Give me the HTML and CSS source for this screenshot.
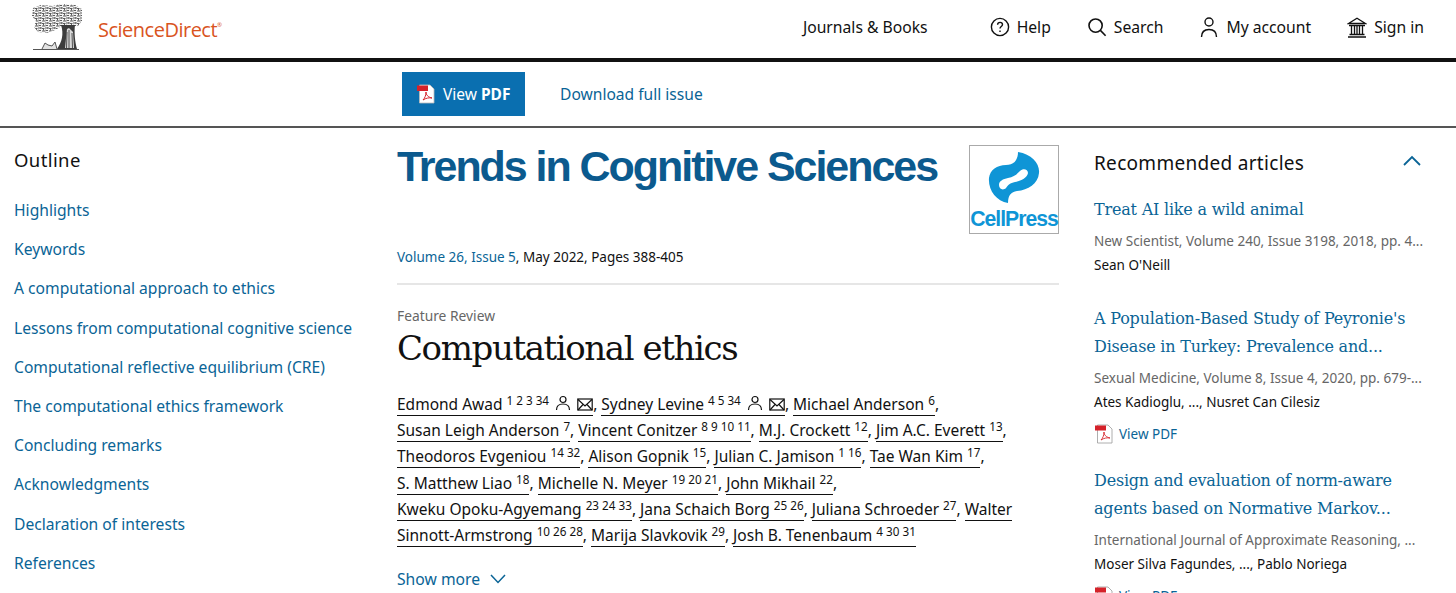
FILE: index.html
```html
<!DOCTYPE html>
<html lang="en">

<head>
    <meta charset="utf-8">
    <title>Computational ethics - ScienceDirect</title>
    <link rel="stylesheet" href="styles.css">
</head>

<body>

    <!-- top header -->
    <header class="site-header">
        <a class="brand">
            <svg class="tree" width="52" height="50" viewBox="0 0 52 50">
                <defs>
                    <pattern id="leaves" width="7" height="5" patternUnits="userSpaceOnUse">
                        <rect width="7" height="5" fill="#f4f4f4"/>
                        <path d="M0 1h3M4 1.500h2.500M1 3.500h2M4 4h3M3 0v2M0 2.500v2M5.500 2v1.500" stroke="#333" stroke-width=".8"/>
                    </pattern>
                </defs>
                <path d="M2 6 L10 3 L22 4 L30 2 L44 3 L51 7 L51 19 L47 24 L38 25 L31 24 L24 28 L16 31 L7 30 L3 25 L5 19 L1 14Z" fill="url(#leaves)"/>
                <path d="M30 23 C33 32 31 40 26 47 L46 47 C44 40 43 30 44 23Z" fill="#3c3c3c"/>
                <path d="M36 27 L38 26 L42 30 L43 46 L34 46Z" fill="#d8d8d8"/>
                <path d="M38 28 L38 46 M41 31 L41.500 46 M36 30 L35.500 46" stroke="#444" stroke-width=".9"/>
                <path d="M2 47.500 H48" stroke="#555" stroke-width="1"/>
                <path d="M11 47 L14 41 L17 43 L21 44 L24 40 L26 47" fill="#e2e2e2" stroke="#555" stroke-width="1"/>
            </svg>
            <span class="brand-name">ScienceDirect<sup>®</sup></span>
        </a>
        <nav class="site-nav">
            <a class="journals">Journals &amp; Books</a>
            <a class="nav-item">
                <svg width="20" height="20" viewBox="0 0 20 20" fill="none" stroke="#111" stroke-width="1.400"><circle cx="10" cy="10" r="8.600"/><path d="M7.600 7.800c0-1.500 1.100-2.400 2.500-2.400s2.400.9 2.400 2.200c0 1.900-2.500 2-2.500 4"/><path d="M10 13.600v1.300"/></svg>
                Help
            </a>
            <a class="nav-item">
                <svg width="20" height="20" viewBox="0 0 20 20" fill="none" stroke="#111" stroke-width="1.600"><circle cx="8.600" cy="8.600" r="6.600"/><path d="M13.400 13.400 L18.600 18.800"/></svg>
                Search
            </a>
            <a class="nav-item">
                <svg width="20" height="22" viewBox="0 0 20 22" fill="none" stroke="#111" stroke-width="1.400"><circle cx="10" cy="6" r="4"/><path d="M2.500 21c0-5 3-7.500 7.500-7.500s7.500 2.500 7.500 7.500"/></svg>
                My account
            </a>
            <a class="nav-item">
                <svg width="20" height="21" viewBox="0 0 20 21" fill="none" stroke="#111" stroke-width="1.300"><path d="M1.500 6.500 L10 1.200 L18.500 6.500Z"/><path d="M2 8.500H18M4.500 9v8M7.500 9v8M10 9v8M12.500 9v8M15.500 9v8M2.500 17.500H17.500M1 20H19"/></svg>
                Sign in
            </a>
        </nav>
    </header>

    <!-- toolbar -->
    <div class="toolbar">
        <a class="btn-pdf">
            <svg class="pdf-icon" width="20" height="20" viewBox="0 0 20 20">
                <path d="M3.500 1H14L18 5V19H3.500Z" fill="#fff" stroke="#bbb" stroke-width=".8"/>
                <rect x="1" y="1.500" width="11" height="5.500" fill="#d5222a"/>
                <path d="M7 16c2-2 3-5 3-8 0 3 2 5 6 6-3-.500-6 0-9 2Z" fill="none" stroke="#d5222a" stroke-width="1"/>
            </svg>
            <span>View <b>PDF</b></span>
        </a>
        <a class="link-issue">Download full issue</a>
    </div>

    <div class="page">
        <!-- outline -->
        <aside class="outline">
            <h2>Outline</h2>
            <ul>
                <li>Highlights</li>
                <li>Keywords</li>
                <li>A computational approach to ethics</li>
                <li>Lessons from computational cognitive science</li>
                <li>Computational reflective equilibrium (CRE)</li>
                <li>The computational ethics framework</li>
                <li>Concluding remarks</li>
                <li>Acknowledgments</li>
                <li>Declaration of interests</li>
                <li>References</li>
            </ul>
        </aside>

        <!-- article -->
        <main class="article">
            <div class="journal-head">
                <h1 class="journal-title">Trends in Cognitive Sciences</h1>
                <div class="cell-logo">
                    <svg width="88" height="63" viewBox="0 0 88 63">
                        <path d="M48 6 C62 8 70 18 69 27 C68 38 58 44 47 45 C41 46 38 49 38 57 C26 55 18 44 19 32 C20 24 27 19 36 19 C43 19 48 15 48 6Z" fill="#0f95d6"/>
                        <path d="M29 39 C29 35 33 33 38 32 C44 31 47 28 50 25 C53 22 58 23 58 27 C57 32 51 35 45 36 C40 37 38 39 36 42 C33 45 29 43 29 39Z" fill="#fff"/>
                    </svg>
                    <span>CellPress</span>
                </div>
            </div>
            <p class="issue"><a>Volume 26, Issue 5</a>, May 2022, Pages 388-405</p>
            <p class="article-type">Feature Review</p>
            <h1 class="article-title">Computational ethics</h1>
            <p class="authors">
                <a>Edmond Awad <sup>1 2 3 34</sup> <svg class="a-icon" width="16" height="16" viewBox="0 0 16 16" fill="none" stroke="#111" stroke-width="1.200"><circle cx="8" cy="4.500" r="3"/><path d="M1.500 15c0-4 2.500-6 6.500-6s6.500 2 6.500 6"/></svg> <svg class="a-icon" width="16" height="13" viewBox="0 0 16 13" fill="none" stroke="#111" stroke-width="1.200"><rect x=".8" y="1" width="14.400" height="11"/><path d="M1 1.500 8 8l7-6.500M1 12l5-5.500M15 12l-5-5.500"/></svg></a>,
                <a>Sydney Levine <sup>4 5 34</sup> <svg class="a-icon" width="16" height="16" viewBox="0 0 16 16" fill="none" stroke="#111" stroke-width="1.200"><circle cx="8" cy="4.500" r="3"/><path d="M1.500 15c0-4 2.500-6 6.500-6s6.500 2 6.500 6"/></svg> <svg class="a-icon" width="16" height="13" viewBox="0 0 16 13" fill="none" stroke="#111" stroke-width="1.200"><rect x=".8" y="1" width="14.400" height="11"/><path d="M1 1.500 8 8l7-6.500M1 12l5-5.500M15 12l-5-5.500"/></svg></a>,
                <a>Michael Anderson <sup>6</sup></a>,<br>
                <a>Susan Leigh Anderson <sup>7</sup></a>,
                <a>Vincent Conitzer <sup>8 9 10 11</sup></a>,
                <a>M.J. Crockett <sup>12</sup></a>,
                <a>Jim A.C. Everett <sup>13</sup></a>,<br>
                <a>Theodoros Evgeniou <sup>14 32</sup></a>,
                <a>Alison Gopnik <sup>15</sup></a>,
                <a>Julian C. Jamison <sup>1 16</sup></a>,
                <a>Tae Wan Kim <sup>17</sup></a>,<br>
                <a>S. Matthew Liao <sup>18</sup></a>,
                <a>Michelle N. Meyer <sup>19 20 21</sup></a>,
                <a>John Mikhail <sup>22</sup></a>,<br>
                <a>Kweku Opoku-Agyemang <sup>23 24 33</sup></a>,
                <a>Jana Schaich Borg <sup>25 26</sup></a>,
                <a>Juliana Schroeder <sup>27</sup></a>,
                <a>Walter</a><br>
                <a>Sinnott-Armstrong <sup>10 26 28</sup></a>,
                <a>Marija Slavkovik <sup>29</sup></a>,
                <a>Josh B. Tenenbaum <sup>4 30 31</sup></a>
            </p>
            <a class="show-more">Show more
                <svg width="16" height="10" viewBox="0 0 16 10" fill="none" stroke="#0a6496" stroke-width="1.500"><path d="M1 1 L8 8.500 L15 1"/></svg>
            </a>
        </main>

        <!-- recommended -->
        <aside class="recommended">
            <div class="rec-head">
                <h2>Recommended articles</h2>
                <svg class="rec-toggle" width="18" height="11" viewBox="0 0 18 11" fill="none" stroke="#0a6496" stroke-width="1.800"><path d="M1 10 L9 2 L17 10"/></svg>
            </div>
            <article class="rec rec-nopdf">
                <a class="rec-title">Treat AI like a wild animal</a>
                <p class="rec-source">New Scientist, Volume 240, Issue 3198, 2018, pp. 4...</p>
                <p class="rec-authors">Sean O'Neill</p>
            </article>
            <article class="rec">
                <a class="rec-title">A Population-Based Study of Peyronie's Disease in Turkey: Prevalence and...</a>
                <p class="rec-source">Sexual Medicine, Volume 8, Issue 4, 2020, pp. 679-...</p>
                <p class="rec-authors">Ates Kadioglu, ..., Nusret Can Cilesiz</p>
                <a class="rec-pdf">
                    <svg width="20" height="20" viewBox="0 0 20 20"><path d="M3.500 1H14L18 5V19H3.500Z" fill="#fff" stroke="#999" stroke-width=".8"/><rect x="1" y="1.500" width="11" height="5" fill="#d5222a"/><path d="M7 16c2-2 3-5 3-8 0 3 2 5 6 6-3-.500-6 0-9 2Z" fill="none" stroke="#d5222a" stroke-width=".9"/></svg>
                    View PDF
                </a>
            </article>
            <article class="rec">
                <a class="rec-title">Design and evaluation of norm-aware agents based on Normative Markov...</a>
                <p class="rec-source">International Journal of Approximate Reasoning, ...</p>
                <p class="rec-authors">Moser Silva Fagundes, ..., Pablo Noriega</p>
                <a class="rec-pdf">
                    <svg width="20" height="20" viewBox="0 0 20 20"><path d="M3.500 1H14L18 5V19H3.500Z" fill="#fff" stroke="#999" stroke-width=".8"/><rect x="1" y="1.500" width="11" height="5" fill="#d5222a"/><path d="M7 16c2-2 3-5 3-8 0 3 2 5 6 6-3-.500-6 0-9 2Z" fill="none" stroke="#d5222a" stroke-width=".9"/></svg>
                    View PDF
                </a>
            </article>
        </aside>
    </div>

</body>

</html>
```

FILE: styles.css
```css
* {
    box-sizing: border-box;
}

html,
body {
    height: 593px;
    overflow: hidden;
}

body {
    margin: 0;
    background: #fff;
    color: #111;
    font-family: "Noto Sans", sans-serif;
    font-size: 16px;
}

a {
    color: inherit;
    text-decoration: none;
}

p,
h1,
h2,
ul {
    margin: 0;
    padding: 0;
    font-weight: 400;
}

/* header */
.site-header {
    height: 62px;
    border-bottom: 4px solid #111;
    display: flex;
    align-items: center;
    justify-content: space-between;
    padding: 0 32px 0 31px;
}

.brand {
    display: flex;
    align-items: center;
    gap: 15px;
    margin-top: -4px;
}

.brand-name {
    font-family: "Open Sans", sans-serif;
    font-size: 20px;
    letter-spacing: -0.5px;
    color: #d9541e;
    margin-top: 4px;
}

.brand-name sup {
    font-size: 6px;
    vertical-align: 10px;
    line-height: 0;
}

.site-nav {
    display: flex;
    align-items: center;
    margin-top: -4px;
}

.site-nav a {
    display: flex;
    align-items: center;
    gap: 7px;
    font-size: 15.700px;
}

.journals {
    margin-right: 62px;
}

.nav-item {
    margin-right: 36px;
}

.nav-item:last-child {
    margin-right: 0;
}

/* toolbar */
.toolbar {
    height: 66px;
    border-bottom: 2px solid #555;
    padding: 10px 0 0 402px;
    display: flex;
    align-items: flex-start;
    gap: 35px;
}

.btn-pdf {
    width: 123px;
    height: 44px;
    background: #0a6fb0;
    color: #fff;
    display: flex;
    align-items: center;
    gap: 7px;
    padding-left: 14px;
    font-size: 15.500px;
}

.link-issue {
    color: #0a6496;
    line-height: 44px;
    font-size: 15.600px;
}

/* columns */
.page {
    display: grid;
    grid-template-columns: 383px 662px 362px;
    column-gap: 0;
    padding-left: 14px;
}

.page > .recommended {
    margin-left: 35px;
}

/* outline */
.outline h2 {
    font-size: 18.500px;
    letter-spacing: .4px;
    line-height: 24px;
    margin-top: 20px;
}

.outline ul {
    list-style: none;
    margin-top: 27px;
}

.outline li {
    color: #0a6496;
    font-size: 15.650px;
    line-height: 22px;
    margin-bottom: 17.200px;
}

/* article */
.journal-head {
    height: 119px;
    padding-top: 17px;
    display: flex;
    justify-content: space-between;
    align-items: flex-start;
}

.journal-title {
    font-family: "Liberation Sans", sans-serif;
    font-weight: 700;
    font-size: 43px;
    line-height: 40px;
    letter-spacing: -2.050px;
    color: #0b5a8e;
    margin-top: 1px;
}

.cell-logo {
    width: 90px;
    height: 89px;
    border: 1px solid #aaa;
    display: flex;
    flex-direction: column;
    align-items: center;
    font-family: "Liberation Sans", sans-serif;
    font-size: 21.200px;
    font-weight: 700;
    letter-spacing: -1px;
    line-height: 20px;
    color: #0f95d6;
}

.issue {
    font-size: 13.500px;
    line-height: 20px;
    padding-bottom: 16px;
    border-bottom: 2px solid #e6e6e6;
}

.issue a {
    color: #0a6496;
}

.article-type {
    font-size: 13.800px;
    line-height: 21px;
    color: #666;
    margin-top: 20px;
}

.article-title {
    font-family: "DejaVu Serif", serif;
    font-size: 34px;
    line-height: 44px;
    letter-spacing: -1.400px;
}

.authors {
    margin-top: 21px;
    font-size: 15.500px;
    line-height: 26.200px;
    white-space: nowrap;
}

.authors a {
    border-bottom: 1px solid #111;
}

.authors sup {
    font-size: 11.700px;
    line-height: 0;
    vertical-align: 5px;
}

.a-icon {
    vertical-align: -1px;
    margin-left: 2px;
}

.show-more {
    display: flex;
    align-items: center;
    gap: 10px;
    margin-top: 20px;
    color: #0a6496;
    font-size: 15.700px;
}

/* recommended */
.rec-head {
    display: flex;
    justify-content: space-between;
    align-items: center;
    margin-top: 23px;
    margin-bottom: 21px;
}

.rec-head h2 {
    font-size: 19px;
    letter-spacing: .3px;
    line-height: 24px;
}

.rec-toggle {
    margin-top: -5px;
}

.rec {
    margin-bottom: 23px;
}

.rec-nopdf {
    margin-bottom: 30px;
}

.rec-title {
    display: block;
    width: 340px;
    font-family: "DejaVu Serif", serif;
    font-size: 16px;
    letter-spacing: -0.200px;
    line-height: 28px;
    color: #0a6496;
}

.rec-source {
    font-size: 13.500px;
    line-height: 20px;
    color: #666;
    margin-top: 6.500px;
    white-space: nowrap;
}

.rec-authors {
    font-size: 13.500px;
    line-height: 20px;
    margin-top: 4.500px;
}

.rec-pdf {
    display: flex;
    align-items: center;
    gap: 5px;
    margin-top: 12px;
    font-size: 13.500px;
    color: #0a6496;
}
```
